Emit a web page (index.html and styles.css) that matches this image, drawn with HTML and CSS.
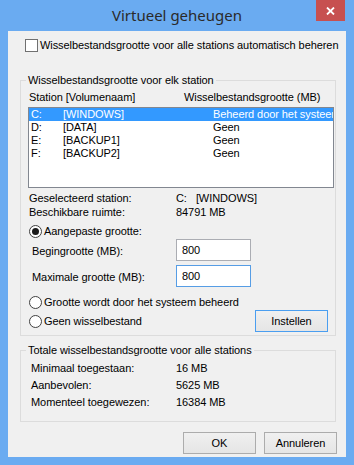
FILE: index.html
```html
<!DOCTYPE html>
<html lang="nl">
<head>
<meta charset="utf-8">
<title>Virtueel geheugen</title>
<link rel="stylesheet" href="styles.css">
</head>
<body>
<div class="window">
  <div class="titlebar">
    <span class="title">Virtueel geheugen</span>
    <div class="close">
      <svg width="9" height="8" viewBox="0 0 9 8"><path d="M1 0.5 L8 7.5 M8 0.5 L1 7.5" stroke="#fff" stroke-width="1.8" fill="none"/></svg>
    </div>
  </div>
  <div class="client">
    <div class="check-row"><span class="checkbox"></span><span>Wisselbestandsgrootte voor alle stations automatisch beheren</span></div>

    <fieldset class="group stations">
      <legend>Wisselbestandsgrootte voor elk station</legend>
      <div class="list-header"><span class="col-a">Station [Volumenaam]</span><span>Wisselbestandsgrootte (MB)</span></div>
      <div class="listbox">
        <div class="row selected"><span class="c1">C:</span><span class="c2">[WINDOWS]</span><span class="c3">Beheerd door het systeem</span></div>
        <div class="row"><span class="c1">D:</span><span class="c2">[DATA]</span><span class="c3">Geen</span></div>
        <div class="row"><span class="c1">E:</span><span class="c2">[BACKUP1]</span><span class="c3">Geen</span></div>
        <div class="row"><span class="c1">F:</span><span class="c2">[BACKUP2]</span><span class="c3">Geen</span></div>
      </div>
      <div class="info">
        <span>Geselecteerd station:</span><span><span class="drive">C:</span>[WINDOWS]</span>
        <span>Beschikbare ruimte:</span><span>84791 MB</span>
      </div>
      <div class="radio-row first"><span class="radio checked"></span><span>Aangepaste grootte:</span></div>
      <div class="field-row first"><span class="field-label">Begingrootte (MB):</span><div class="input">800</div></div>
      <div class="field-row second"><span class="field-label">Maximale grootte (MB):</span><div class="input focused">800</div></div>
      <div class="radio-row system"><span class="radio"></span><span>Grootte wordt door het systeem beheerd</span></div>
      <div class="radio-row last"><span class="radio"></span><span>Geen wisselbestand</span><button class="btn default">Instellen</button></div>
    </fieldset>

    <fieldset class="group totals">
      <legend>Totale wisselbestandsgrootte voor alle stations</legend>
      <div class="totals-grid">
        <span>Minimaal toegestaan:</span><span>16 MB</span>
        <span>Aanbevolen:</span><span>5625 MB</span>
        <span>Momenteel toegewezen:</span><span>16384 MB</span>
      </div>
    </fieldset>

    <div class="buttons">
      <button class="btn">OK</button>
      <button class="btn">Annuleren</button>
    </div>
  </div>
</div>
</body>
</html>
```

FILE: styles.css
```css
html, body {
  margin: 0;
  padding: 0;
}

.window {
  width: 354px;
  height: 465px;
  box-sizing: border-box;
  background: #6aabf1;
  padding: 0 8px 8px 8px;
  display: flex;
  flex-direction: column;
}

.titlebar {
  position: relative;
  height: 31px;
  flex: none;
  text-align: center;
}

.title {
  font-family: "Noto Sans", "Open Sans", sans-serif;
  font-size: 15px;
  line-height: 30px;
  color: #2a2a2a;
}

.close {
  position: absolute;
  top: 0;
  right: 1px;
  width: 29px;
  height: 21px;
  background: #c75050;
  display: flex;
  align-items: center;
  justify-content: center;
}

.client {
  flex: 1;
  background: #f0f0f0;
  padding-top: 8px;
  font-family: "Liberation Sans", Arial, sans-serif;
  font-size: 11px;
  line-height: 13px;
  letter-spacing: -0.07px;
  color: #000;
}

.check-row {
  display: flex;
  align-items: center;
  height: 13px;
  margin-left: 17px;
}

.checkbox {
  width: 13px;
  height: 13px;
  box-sizing: border-box;
  border: 1px solid #707070;
  background: #fff;
  margin-right: 2px;
  flex: none;
}

.group {
  margin: 22px 0 0 12px;
  width: 316px;
  box-sizing: border-box;
  border: 1px solid #dcdcdc;
  padding: 4px 0 3px 8px;
  min-width: 0;
}

.group legend {
  padding: 0 2px;
  margin-left: -3px;
  line-height: 13px;
}

.list-header {
  display: flex;
  height: 13px;
}

.col-a {
  width: 155px;
}

.listbox {
  margin: 3px 0 0 -1px;
  width: 306px;
  height: 81px;
  box-sizing: border-box;
  border: 1px solid #828790;
  background: #fff;
  overflow: hidden;
}

.row {
  display: flex;
  height: 13px;
  padding-left: 2px;
  white-space: nowrap;
}

.row.selected {
  background: #3399ff;
  color: #fff;
}

.c1 { width: 32px; flex: none; }
.c2 { width: 150px; flex: none; }
.c3 { flex: 1; overflow: hidden; }

.info {
  margin-top: 3px;
  display: grid;
  grid-template-columns: 147px auto;
  line-height: 14px;
}

.drive {
  margin-right: 9px;
}

.radio-row {
  display: flex;
  align-items: center;
  height: 13px;
}

.radio-row.first { margin-top: 6px; }
.radio-row.system { margin-top: 9px; }
.radio-row.last {
  margin-top: 1px;
  height: 22px;
}

.radio {
  width: 13px;
  height: 13px;
  box-sizing: border-box;
  border: 1px solid #404040;
  border-radius: 50%;
  background: #fff;
  margin-right: 2px;
  flex: none;
  display: flex;
  align-items: center;
  justify-content: center;
}

.radio.checked::after {
  content: "";
  width: 7px;
  height: 7px;
  border-radius: 50%;
  background: #1a1a1a;
}

.field-row {
  display: flex;
  align-items: center;
  height: 22px;
}

.field-row.first { margin-top: 1px; }
.field-row.second { margin-top: 4px; }

.field-label {
  width: 144px;
  padding-left: 3px;
  padding-top: 2px;
}

.input {
  width: 75px;
  height: 22px;
  box-sizing: border-box;
  border: 1px solid #abadb3;
  background: #fff;
  padding-left: 5px;
  line-height: 20px;
}

.input.focused {
  border-color: #569de5;
}

.btn {
  width: 73px;
  height: 22px;
  box-sizing: border-box;
  border: 1px solid #acacac;
  background: linear-gradient(#f0f0f0, #e5e5e5);
  font-family: "Liberation Sans", Arial, sans-serif;
  font-size: 11px;
  letter-spacing: -0.07px;
  color: #000;
  padding: 0;
  margin: 0;
}

.btn.default {
  border-color: #4a9ef0;
  margin-left: auto;
  margin-right: 7px;
}

.totals {
  margin-top: 8px;
  padding: 3px 0 10px 10px;
}

.totals legend {
  margin-left: -5px;
}

.totals-grid {
  display: grid;
  grid-template-columns: 145px auto;
  line-height: 17px;
}

.buttons {
  display: flex;
  justify-content: flex-end;
  gap: 8px;
  margin: 10px 9px 0 0;
}
```
